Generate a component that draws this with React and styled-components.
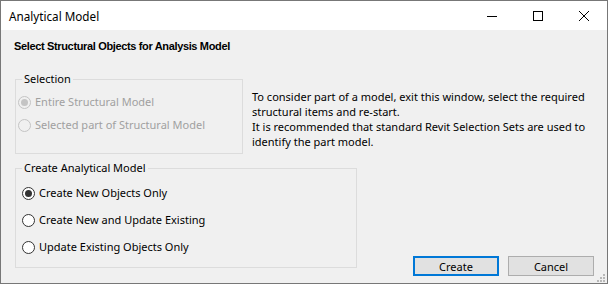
import React from "react";
import styled, { createGlobalStyle } from "styled-components";

const GlobalStyle = createGlobalStyle`
  html, body {
    margin: 0;
    padding: 0;
    background: #ffffff;
  }
  body {
    font-family: "Noto Sans", "Liberation Sans", sans-serif;
    font-size: 11px;
    color: #000000;
  }
`;

const Window = styled.div`
  position: relative;
  box-sizing: border-box;
  width: 608px;
  height: 284px;
  border: 1px solid #777777;
  display: flex;
  flex-direction: column;
  background: #f0f0f0;
`;

const TitleBar = styled.div`
  height: 29px;
  flex: none;
  background: #ffffff;
  display: flex;
  align-items: center;
  justify-content: space-between;
`;

const Title = styled.div`
  padding-left: 8px;
  font-size: 11.7px;
  line-height: 16px;
`;

const Controls = styled.div`
  display: flex;
  height: 100%;
`;

const ControlButton = styled.div`
  width: 46px;
  height: 100%;
  display: flex;
  align-items: center;
  justify-content: center;
`;

const Body = styled.div`
  flex: 1;
  display: flex;
  flex-direction: column;
  padding: 0 13px 8px 13px;
`;

const Heading = styled.div`
  font-family: "Liberation Sans", Arial, sans-serif;
  font-weight: bold;
  font-size: 11px;
  line-height: 13px;
  margin-top: 10px;
  letter-spacing: -0.35px;
`;

const Row = styled.div`
  display: flex;
  align-items: ${({ $align }) => $align || "flex-start"};
  justify-content: space-between;
  margin-top: ${({ $top }) => $top}px;
`;

const Group = styled.fieldset`
  box-sizing: border-box;
  margin: 0 0 ${({ $bottom }) => $bottom || 0}px 1px;
  width: ${({ $width }) => $width}px;
  height: ${({ $height }) => $height}px;
  border: 1px solid #dcdcdc;
  padding: 0 0 0 ${({ $inset }) => $inset}px;
  min-width: 0;
`;

const Legend = styled.legend`
  padding: 0 2px;
  margin-left: ${({ $shift }) => $shift}px;
  font-size: 11px;
  line-height: 16px;
`;

const Options = styled.div`
  display: flex;
  flex-direction: column;
  gap: ${({ $gap }) => $gap}px;
  padding-top: ${({ $top }) => $top}px;
`;

const Option = styled.label`
  display: flex;
  align-items: center;
  gap: 4px;
  height: 16px;
  line-height: 16px;
  white-space: nowrap;
  color: ${({ $disabled }) => ($disabled ? "#a0a0a0" : "#000000")};
`;

const RadioDot = styled.span`
  box-sizing: border-box;
  width: 13px;
  height: 13px;
  border-radius: 50%;
  border: 1px solid ${({ $disabled }) => ($disabled ? "#c4c4c4" : "#333333")};
  background: ${({ $disabled }) => ($disabled ? "#f0f0f0" : "#ffffff")};
  display: flex;
  align-items: center;
  justify-content: center;
  flex: none;

  &::after {
    content: "";
    width: 7px;
    height: 7px;
    border-radius: 50%;
    background: ${({ $disabled }) => ($disabled ? "#c4c4c4" : "#333333")};
    display: ${({ $checked }) => ($checked ? "block" : "none")};
  }
`;

const Info = styled.div`
  flex: 1;
  margin: 18px 0 0 9px;
  line-height: 15px;
`;

const Buttons = styled.div`
  display: flex;
  gap: 9px;
`;

const Button = styled.div`
  box-sizing: border-box;
  width: 86px;
  height: 20px;
  display: flex;
  align-items: center;
  justify-content: center;
  background: #e1e1e1;
  border: ${({ $primary }) =>
    $primary ? "2px solid #0078d7" : "1px solid #adadad"};
`;

const Grip = styled.svg`
  position: absolute;
  right: 2px;
  bottom: 1px;
`;

function Radio({ label, checked, disabled }) {
  return (
    <Option $disabled={disabled}>
      <RadioDot $checked={checked} $disabled={disabled} />
      {label}
    </Option>
  );
}

export default function App() {
  return (
    <>
      <GlobalStyle />
      <Window>
        <TitleBar>
          <Title>Analytical Model</Title>
          <Controls>
            <ControlButton>
              <svg width="10" height="10" viewBox="0 0 10 10">
                <rect x="0" y="5" width="10" height="1" fill="#000" />
              </svg>
            </ControlButton>
            <ControlButton>
              <svg width="10" height="10" viewBox="0 0 10 10">
                <rect x="0.5" y="0.5" width="9" height="9" fill="none" stroke="#000" />
              </svg>
            </ControlButton>
            <ControlButton>
              <svg width="10" height="10" viewBox="0 0 10 10">
                <path d="M0 0L10 10M10 0L0 10" stroke="#000" strokeWidth="1" />
              </svg>
            </ControlButton>
          </Controls>
        </TitleBar>
        <Body>
          <Heading>Select Structural Objects for Analysis Model</Heading>
          <Row $top={18}>
            <Group $width={228} $height={83} $inset={2}>
              <Legend $shift={4}>Selection</Legend>
              <Options $gap={7} $top={7}>
                <Radio label="Entire Structural Model" checked disabled />
                <Radio label="Selected part of Structural Model" disabled />
              </Options>
            </Group>
            <Info>
              To consider part of a model, exit this window, select the required
              structural items and re-start.
              <br />
              It is recommended that standard Revit Selection Sets are used to
              identify the part model.
            </Info>
          </Row>
          <Row $align="flex-end" $top={6}>
            <Group $width={342} $height={108} $inset={6} $bottom={8}>
              <Legend $shift={0}>Create Analytical Model</Legend>
              <Options $gap={11} $top={9}>
                <Radio label="Create New Objects Only" checked />
                <Radio label="Create New and Update Existing" />
                <Radio label="Update Existing Objects Only" />
              </Options>
            </Group>
            <Buttons>
              <Button $primary>Create</Button>
              <Button>Cancel</Button>
            </Buttons>
          </Row>
        </Body>
        <Grip width="8" height="8" viewBox="0 0 8 8">
          <rect x="6" y="0" width="2" height="2" fill="#b8b8b8" />
          <rect x="3" y="3" width="2" height="2" fill="#b8b8b8" />
          <rect x="6" y="3" width="2" height="2" fill="#b8b8b8" />
          <rect x="0" y="6" width="2" height="2" fill="#b8b8b8" />
          <rect x="3" y="6" width="2" height="2" fill="#b8b8b8" />
          <rect x="6" y="6" width="2" height="2" fill="#b8b8b8" />
        </Grip>
      </Window>
    </>
  );
}
